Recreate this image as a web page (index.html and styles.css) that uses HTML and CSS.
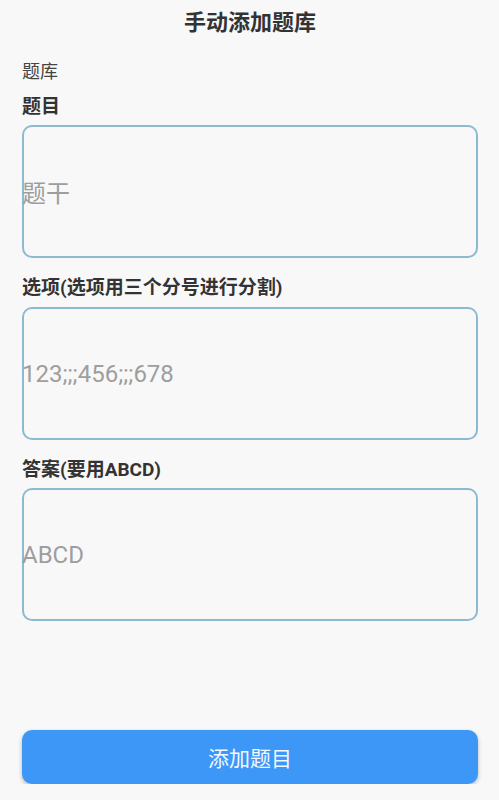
FILE: index.html
```html
<!DOCTYPE html>
<html lang="zh-CN">
<head>
<meta charset="utf-8">
<title>手动添加题库</title>
<link rel="stylesheet" href="styles.css">
</head>
<body>
<div class="page">
  <header class="title">手动添加题库</header>
  <div class="bank">题库</div>
  <div class="label label-first">题目</div>
  <div class="field field-first"><span class="ph">题干</span></div>
  <div class="label">选项(选项用三个分号进行分割)</div>
  <div class="field"><span class="ph">123;;;456;;;678</span></div>
  <div class="label">答案(要用ABCD)</div>
  <div class="field field-last"><span class="ph">ABCD</span></div>
  <button class="submit">添加题目</button>
</div>
</body>
</html>
```

FILE: styles.css
```css
* { box-sizing: border-box; }
html, body {
  margin: 0;
  padding: 0;
  background: #f8f8f8;
}
body {
  font-family: Roboto, "Noto Sans CJK SC", "Noto Sans", sans-serif;
  color: #333;
}
.page {
  display: flex;
  flex-direction: column;
  padding: 0 21px 0 22px;
}
.title {
  height: 46px;
  line-height: 46px;
  text-align: center;
  font-size: 22px;
  font-weight: 700;
  color: #333;
}
.bank {
  margin-top: 14px;
  line-height: 24px;
  font-size: 18px;
  color: #444;
}
.label {
  margin-top: 18px;
  line-height: 24px;
  font-size: 19px;
  font-weight: 700;
  color: #333;
}
.label-first { margin-top: 11px; }
.field {
  margin-top: 7px;
  height: 133px;
  border: 2px solid #8cbbd1;
  border-radius: 10px;
  display: flex;
  align-items: center;
  padding-left: 0;
}
.field-first { margin-top: 6px; }
.field-last { margin-top: 6px; }
.ph {
  font-size: 24px;
  color: #9e9e9e;
  margin-left: -2px;
}
.submit {
  margin-top: 109px;
  height: 54px;
  border: none;
  border-radius: 10px;
  background: #3c97f6;
  color: #f4f8ff;
  font-family: Roboto, "Noto Sans CJK SC", sans-serif;
  font-size: 21px;
  box-shadow: 0 2px 4px rgba(0, 0, 0, 0.25);
}
```
